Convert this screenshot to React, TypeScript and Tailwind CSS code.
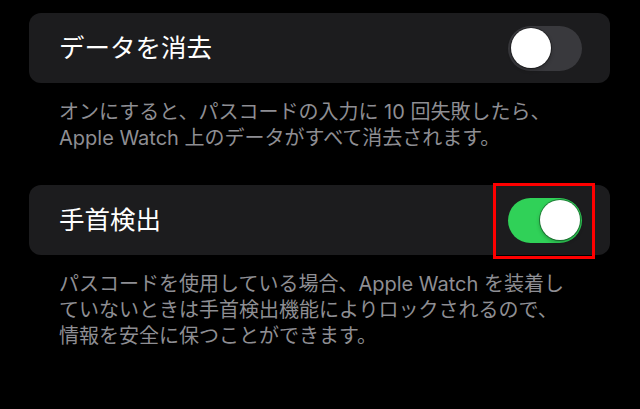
import React from "react";

function Toggle({ on }: { on: boolean }) {
  return (
    <div
      className={
        "relative flex h-[45px] w-[74px] shrink-0 items-center rounded-full px-[2.5px] " +
        (on ? "justify-end bg-[#30d158]" : "justify-start bg-[#39393d]")
      }
    >
      <div className="h-[40px] w-[40px] rounded-full bg-white shadow-[0_0_0_1px_rgba(0,0,0,0.35),0_2px_4px_rgba(0,0,0,0.3)]" />
    </div>
  );
}

function Row({ label, on, highlight }: { label: string; on: boolean; highlight?: boolean }) {
  return (
    <div className="flex h-[70px] items-center justify-between rounded-[12px] bg-[#1c1c1e] pl-[30px] pr-[28px]">
      <span className="text-[25.5px] leading-none text-white">{label}</span>
      <div className="relative">
        <Toggle on={on} />
        {highlight && (
          <div className="absolute -bottom-[16px] -left-[15px] -right-[13px] -top-[15px] border-[3px] border-[#ff0000]" />
        )}
      </div>
    </div>
  );
}

export default function App() {
  return (
    <div
      className="h-[409px] w-[640px] overflow-hidden bg-black pl-[29px] pr-[30px] pt-[13px]"
      style={{ fontFamily: 'Inter, "Noto Sans CJK JP", sans-serif' }}
    >
      <Row label="データを消去" on={false} />
      <p className="mt-[17px] pl-[30px] text-[20px] leading-[25.5px] text-[#8e8e93]">
        オンにすると、パスコードの入力に 10 回失敗したら、
        <br />
        Apple Watch 上のデータがすべて消去されます。
      </p>
      <div className="mt-[34px]">
        <Row label="手首検出" on={true} highlight />
      </div>
      <p className="mt-[16px] pl-[30px] text-[20px] leading-[26px] text-[#8e8e93]">
        パスコードを使用している場合、Apple Watch を装着し
        <br />
        ていないときは手首検出機能によりロックされるので、
        <br />
        情報を安全に保つことができます。
      </p>
    </div>
  );
}
